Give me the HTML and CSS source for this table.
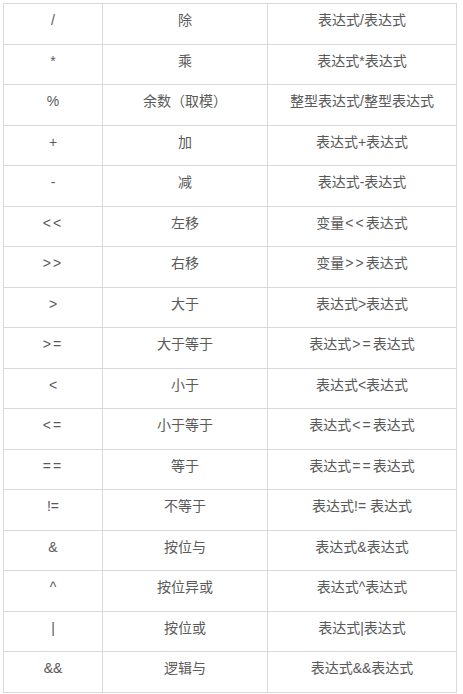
FILE: index.html
```html
<!DOCTYPE html>
<html lang="zh-CN">
<head>
<meta charset="utf-8">
<title>运算符</title>
<link rel="stylesheet" href="styles.css">
</head>
<body>
<div class="ops">
  <div class="c">/</div><div class="c">除</div><div class="c">表达式/表达式</div>
  <div class="c">*</div><div class="c">乘</div><div class="c">表达式*表达式</div>
  <div class="c">%</div><div class="c">余数（取模）</div><div class="c">整型表达式/整型表达式</div>
  <div class="c">+</div><div class="c">加</div><div class="c">表达式+表达式</div>
  <div class="c">-</div><div class="c">减</div><div class="c">表达式-表达式</div>
  <div class="c sp">&lt;&lt;</div><div class="c">左移</div><div class="c">变量<span class="op">&lt;&lt;</span>表达式</div>
  <div class="c sp">&gt;&gt;</div><div class="c">右移</div><div class="c">变量<span class="op">&gt;&gt;</span>表达式</div>
  <div class="c">&gt;</div><div class="c">大于</div><div class="c">表达式&gt;表达式</div>
  <div class="c sp">&gt;=</div><div class="c">大于等于</div><div class="c">表达式<span class="op">&gt;=</span>表达式</div>
  <div class="c">&lt;</div><div class="c">小于</div><div class="c">表达式&lt;表达式</div>
  <div class="c sp">&lt;=</div><div class="c">小于等于</div><div class="c">表达式<span class="op">&lt;=</span>表达式</div>
  <div class="c sp">==</div><div class="c">等于</div><div class="c">表达式<span class="op">==</span>表达式</div>
  <div class="c">!=</div><div class="c">不等于</div><div class="c">表达式!= 表达式</div>
  <div class="c">&amp;</div><div class="c">按位与</div><div class="c">表达式&amp;表达式</div>
  <div class="c">^</div><div class="c">按位异或</div><div class="c">表达式^表达式</div>
  <div class="c">|</div><div class="c">按位或</div><div class="c">表达式|表达式</div>
  <div class="c">&amp;&amp;</div><div class="c">逻辑与</div><div class="c">表达式&amp;&amp;表达式</div>
</div>
</body>
</html>
```

FILE: styles.css
```css
html, body {
  margin: 0;
  padding: 0;
  background: #ffffff;
}

body {
  font-family: "Liberation Sans", "Noto Sans CJK SC", sans-serif;
  font-size: 14px;
  color: #5a5a5a;
}

.ops {
  display: grid;
  grid-template-columns: 99px 165px 189px;
  grid-auto-rows: 40.5px;
  margin: 3px 0 0 3px;
  width: max-content;
  border-left: 1px solid #d9d9d9;
  border-top: 1px solid #d9d9d9;
}

.c {
  box-sizing: border-box;
  border-right: 1px solid #d9d9d9;
  border-bottom: 1px solid #d9d9d9;
  padding-top: 6px;
  line-height: 20px;
  text-align: center;
  white-space: nowrap;
}

.sp {
  letter-spacing: 2px;
}

.op {
  letter-spacing: 2px;
  margin-left: 1px;
}
```
